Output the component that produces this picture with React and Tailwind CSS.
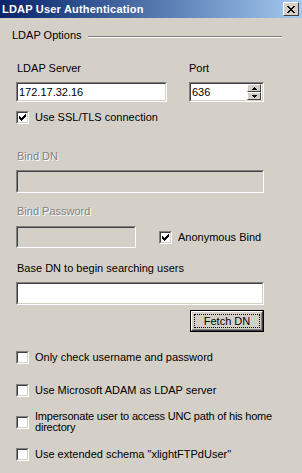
import React from "react";

const sunkenOuter = "border border-t-[#808080] border-l-[#808080] border-b-white border-r-white";
const sunkenInner = "border border-t-[#404040] border-l-[#404040] border-b-[#d4d0c8] border-r-[#d4d0c8]";

function Field({ className = "", disabled = false, value = "", children }) {
  return (
    <div className={`${sunkenOuter} ${className}`}>
      <div className={`${sunkenInner} h-full flex items-center pl-[1px] ${disabled ? "bg-[#d4d0c8]" : "bg-white"}`}>
        <span className="text-black">{value}</span>
        {children}
      </div>
    </div>
  );
}

function Check({ checked }) {
  return (
    <div className={`${sunkenOuter} w-[13px] h-[13px] shrink-0`}>
      <div className={`${sunkenInner} w-full h-full bg-white flex items-center justify-center`}>
        {checked && (
          <svg width="7" height="7" viewBox="0 0 7 7" shapeRendering="crispEdges">
            <path d="M0 2h1v3h-1zM1 3h1v3h-1zM2 4h1v3h-1zM3 3h1v3h-1zM4 2h1v3h-1zM5 1h1v3h-1zM6 0h1v3h-1z" fill="#000" />
          </svg>
        )}
      </div>
    </div>
  );
}

function SpinBtn({ up }) {
  return (
    <div className="w-[14px] h-[8px] bg-[#d4d0c8] border border-t-white border-l-white border-b-[#404040] border-r-[#404040] flex items-center justify-center">
      <svg width="5" height="3" viewBox="0 0 5 3" shapeRendering="crispEdges">
        {up ? (
          <path d="M2 0h1v1h-1zM1 1h3v1h-3zM0 2h5v1h-5z" fill="#000" />
        ) : (
          <path d="M0 0h5v1h-5zM1 1h3v1h-3zM2 2h1v1h-1z" fill="#000" />
        )}
      </svg>
    </div>
  );
}

function Label({ children, disabled, className = "" }) {
  return (
    <div
      className={`h-[13px] leading-[13px] ${disabled ? "text-[#808080] [text-shadow:1px_1px_0_#ffffff]" : "text-black"} ${className}`}
    >
      {children}
    </div>
  );
}

function CheckRow({ checked, children, className = "" }) {
  return (
    <div className={`flex items-center gap-[6px] ${className}`}>
      <Check checked={checked} />
      <span className="leading-[13px] whitespace-nowrap">{children}</span>
    </div>
  );
}

export default function App() {
  return (
    <div
      className="w-[302px] h-[473px] bg-[#d4d0c8] flex flex-col text-[11px] text-black overflow-hidden"
      style={{ fontFamily: '"Liberation Sans", Arial, sans-serif' }}
    >
      {/* Title bar */}
      <div className="h-[18px] shrink-0 flex items-center justify-between pl-[2px] pr-[3px] bg-gradient-to-r from-[#0a246a] to-[#a6caf0]">
        <span className="text-white font-bold text-[11px] leading-[13px] tracking-[0.2px]">LDAP User Authentication</span>
        <div className="w-[16px] h-[14px] bg-[#d4d0c8] border border-t-white border-l-white border-b-[#404040] border-r-[#404040] flex items-center justify-center">
          <svg width="8" height="7" viewBox="0 0 8 7" shapeRendering="crispEdges">
            <path d="M0 0h2v1h-2zM6 0h2v1h-2zM1 1h2v1h-2zM5 1h2v1h-2zM2 2h4v1h-4zM3 3h2v1h-2zM2 4h4v1h-4zM1 5h2v1h-2zM5 5h2v1h-2zM0 6h2v1h-2zM6 6h2v1h-2z" fill="#000" />
          </svg>
        </div>
      </div>

      {/* Group header */}
      <div className="flex items-center mt-[11px] pl-[12px] pr-[20px] h-[13px]">
        <span className="leading-[13px]">LDAP Options</span>
        <div className="flex-1 ml-[6px] mt-[3px] h-[2px] border-t border-t-[#808080] border-b border-b-white" />
      </div>

      <div className="flex flex-col pl-[16px] pr-[38px]">
        {/* Server / Port */}
        <div className="flex mt-[20px]">
          <div className="flex flex-col w-[151px]">
            <Label className="pl-[1px]">LDAP Server</Label>
            <Field className="mt-[7px] h-[20px]" value="172.17.32.16" />
          </div>
          <div className="flex flex-col ml-[22px] w-[75px]">
            <Label>Port</Label>
            <Field className="mt-[7px] h-[20px]" value="636">
              <div className="ml-auto mr-[1px] flex flex-col">
                <SpinBtn up />
                <SpinBtn />
              </div>
            </Field>
          </div>
        </div>

        <CheckRow checked className="mt-[9px]">Use SSL/TLS connection</CheckRow>

        <Label disabled className="mt-[26px] pl-[1px]">Bind DN</Label>
        <Field disabled className="mt-[7px] h-[23px] w-[248px]" />

        <Label disabled className="mt-[12px] pl-[1px]">Bind Password</Label>
        <div className="flex items-center mt-[8px]">
          <Field disabled className="h-[22px] w-[120px]" />
          <CheckRow checked className="ml-[23px]">Anonymous Bind</CheckRow>
        </div>

        <Label className="mt-[14px] pl-[1px]">Base DN to begin searching users</Label>
        <Field className="mt-[7px] h-[23px] w-[248px]" />

        <div className="flex justify-end w-[248px] mt-[5px]">
          <div className="w-[74px] h-[22px] border border-black">
            <div className="w-full h-full border border-t-white border-l-white border-b-[#404040] border-r-[#404040] bg-[#d4d0c8]">
              <div className="w-full h-full border border-t-[#d4d0c8] border-l-[#d4d0c8] border-b-[#808080] border-r-[#808080] p-[1px]">
                <div className="w-full h-full border border-dotted border-black flex items-center justify-center leading-[13px]">
                  Fetch DN
                </div>
              </div>
            </div>
          </div>
        </div>

        <CheckRow className="mt-[19px]">Only check username and password</CheckRow>
        <CheckRow className="mt-[20px]">Use Microsoft ADAM as LDAP server</CheckRow>
        <div className="flex items-center gap-[6px] mt-[14px] -mr-[30px]">
          <Check />
          <span className="leading-[11px] w-[252px] shrink-0 tracking-[-0.2px]">Impersonate user to access UNC path of his home directory</span>
        </div>
        <CheckRow className="mt-[15px]">Use extended schema "xlightFTPdUser"</CheckRow>
      </div>
    </div>
  );
}
